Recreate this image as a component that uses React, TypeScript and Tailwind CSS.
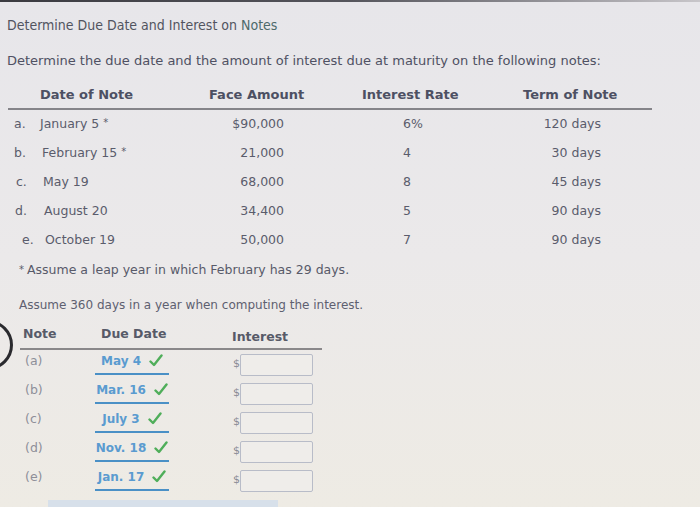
import React from "react";

const rows = [
  { l: "a.", d: "January 5", star: true, f: "$90,000", r: "6%", t: "120 days", lp: "pl-[6px]", dp: "pl-0" },
  { l: "b.", d: "February 15", star: true, f: "21,000", r: "4", t: "30 days", lp: "pl-[6px]", dp: "pl-[2px]" },
  { l: "c.", d: "May 19", star: false, f: "68,000", r: "8", t: "45 days", lp: "pl-[8px]", dp: "pl-[3px]" },
  { l: "d.", d: "August 20", star: false, f: "34,400", r: "5", t: "90 days", lp: "pl-[7px]", dp: "pl-[4px]" },
  { l: "e.", d: "October 19", star: false, f: "50,000", r: "7", t: "90 days", lp: "pl-[14px]", dp: "pl-[5px]" },
];

const answers = [
  { n: "(a)", d: "May 4" },
  { n: "(b)", d: "Mar. 16" },
  { n: "(c)", d: "July 3" },
  { n: "(d)", d: "Nov. 18" },
  { n: "(e)", d: "Jan. 17" },
];

function Check() {
  return (
    <svg width="14" height="13" viewBox="0 0 14 13" className="ml-[8px] inline-block">
      <path d="M1.5 7.5 L5 11 L12.5 1.5" fill="none" stroke="#4fae5a" strokeWidth="2.4" strokeLinecap="round" strokeLinejoin="round" />
    </svg>
  );
}

export default function App() {
  return (
    <div
      className="relative w-[700px] h-[507px] overflow-hidden bg-linear-to-b from-[#e7e6ea] via-[#ebe9ea] to-[#eeebe4] text-[#555866]"
      style={{ fontFamily: "'DejaVu Sans', Verdana, sans-serif" }}
    >
      <div className="h-[2px] bg-linear-to-r from-[#3a3a40] via-[#55555c] to-[#c8c6ca]" />
      <div
        className="mt-[13px] pl-[7px] h-[20px] leading-[20px] text-[14px] text-[#52545f]"
        style={{ fontFamily: "'DejaVu Sans Condensed', Tahoma, sans-serif" }}
      >
        Determine Due Date and Interest on <span className="text-[#4d6a6a]">Notes</span>
      </div>
      <div className="mt-[16px] pl-[7px] h-[20px] leading-[20px] text-[13px] text-[#4f5163]">
        Determine the due date and the amount of interest due at maturity on the following notes:
      </div>

      <div className="mt-[14px] ml-[8px] w-[644px]">
        <div className="flex h-[25px] border-b-2 border-[#858489] text-[13px] font-bold leading-[20px] text-[#4d5063]">
          <div className="w-[201px] pl-[32px]">Date of Note</div>
          <div className="w-[153px]">Face Amount</div>
          <div className="w-[161px]">Interest Rate</div>
          <div>Term of Note</div>
        </div>
        {rows.map((r) => (
          <div key={r.l} className="flex h-[29px] items-center text-[12.5px] text-[#5a5c6c]">
            <div className={`w-[32px] ${r.lp}`}>{r.l}</div>
            <div className={`w-[160px] ${r.dp}`}>
              {r.d}
              {r.star && <span className="ml-[4px] text-[10px] align-top">*</span>}
            </div>
            <div className="w-[84px] text-right">{r.f}</div>
            <div className="w-[119px]" />
            <div className="w-[60px]">{r.r}</div>
            <div className="w-[138px] text-right">{r.t}</div>
          </div>
        ))}
      </div>

      <div className="mt-[5px] pl-[19px] h-[20px] leading-[20px] text-[12.5px] text-[#585a69]">
        <span className="text-[10px] align-top mr-[3px]">*</span>Assume a leap year in which February has 29 days.
      </div>
      <div className="mt-[15px] pl-[19px] h-[20px] leading-[20px] text-[12px] text-[#5e6070]">
        Assume 360 days in a year when computing the interest.
      </div>

      <div className="mt-[9px] ml-[20px] w-[302px]">
        <div className="flex h-[26px] border-b-2 border-[#8a888a] text-[12.5px] font-bold leading-[20px] text-[#575a68]">
          <div className="w-[81px] pl-[3px]">Note</div>
          <div className="w-[131px]">Due Date</div>
          <div className="pt-[3px]">Interest</div>
        </div>
        {answers.map((a) => (
          <div key={a.n} className="flex h-[29px] items-center">
            <div className="w-[75px] pl-[5px] text-[12.5px] text-[#8e8f99] -mt-[6px]">{a.n}</div>
            <div className="w-[80px] -mt-[2px]">
              <div className="w-[74px] h-[22px] border-b-2 border-[#4a90c6] flex items-start justify-center pt-[1px]">
                <span className="text-[12px] font-bold text-[#5a9bd0] leading-[15px]">{a.d}</span>
                <Check />
              </div>
            </div>
            <div className="w-[58px]" />
            <div className="text-[11px] text-[#8a8b95] w-[7px]">$</div>
            <div className="w-[73px] h-[22px] border border-[#b8bcc8] rounded-[2px] bg-[#efedea]" />
          </div>
        ))}
      </div>

      <div className="absolute left-[-37px] top-[320px] w-[50px] h-[50px] rounded-full border-[3px] border-[#2a2a2e]" />
      <div className="absolute left-[48px] top-[500px] w-[230px] h-[7px] bg-[#d7e0ea]" />
    </div>
  );
}
